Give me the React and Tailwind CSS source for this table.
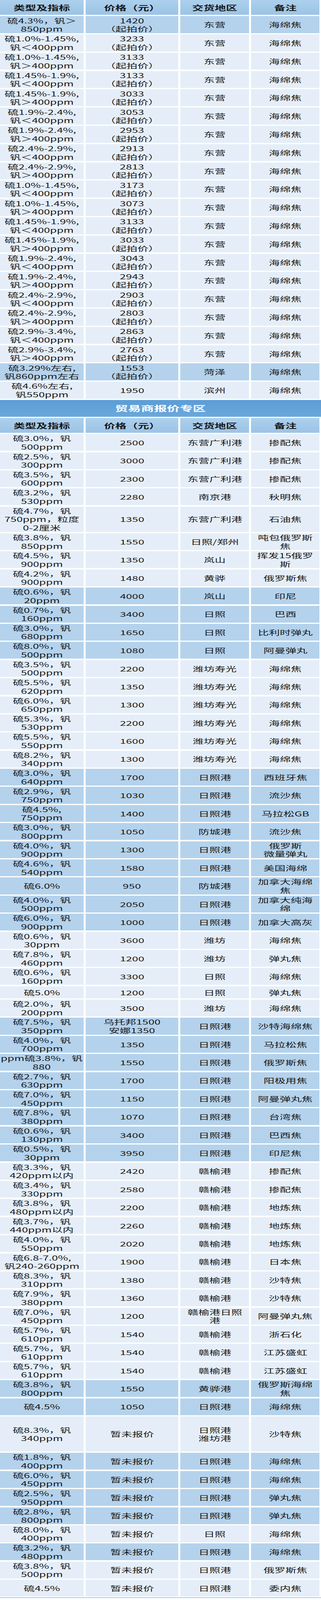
import React from 'react';

// tone: d = deeper blue row, l = light row; optional 6th item = row height class
const auctionRows = [
  ['硫4.3%，钒＞\n850ppm', '1420\n（起拍价）', '东营', '海绵焦', 'd'],
  ['硫1.0%-1.45%,\n钒＜400ppm', '3233\n（起拍价）', '东营', '海绵焦', 'l'],
  ['硫1.0%-1.45%,\n钒＞400ppm', '3133\n（起拍价）', '东营', '海绵焦', 'l'],
  ['硫1.45%-1.9%,\n钒＜400ppm', '3133\n（起拍价）', '东营', '海绵焦', 'l'],
  ['硫1.45%-1.9%,\n钒＞400ppm', '3033\n（起拍价）', '东营', '海绵焦', 'l'],
  ['硫1.9%-2.4%,\n钒＜400ppm', '3053\n（起拍价）', '东营', '海绵焦', 'l'],
  ['硫1.9%-2.4%,\n钒＞400ppm', '2953\n（起拍价）', '东营', '海绵焦', 'l'],
  ['硫2.4%-2.9%,\n钒＜400ppm', '2913\n（起拍价）', '东营', '海绵焦', 'l'],
  ['硫2.4%-2.9%,\n钒＞400ppm', '2813\n（起拍价）', '东营', '海绵焦', 'l'],
  ['硫1.0%-1.45%,\n钒＜400ppm', '3173\n（起拍价）', '东营', '海绵焦', 'l'],
  ['硫1.0%-1.45%,\n钒＞400ppm', '3073\n（起拍价）', '东营', '海绵焦', 'l'],
  ['硫1.45%-1.9%,\n钒＜400ppm', '3133\n（起拍价）', '东营', '海绵焦', 'l'],
  ['硫1.45%-1.9%,\n钒＞400ppm', '3033\n（起拍价）', '东营', '海绵焦', 'l'],
  ['硫1.9%-2.4%,\n钒＜400ppm', '3043\n（起拍价）', '东营', '海绵焦', 'l'],
  ['硫1.9%-2.4%,\n钒＞400ppm', '2943\n（起拍价）', '东营', '海绵焦', 'l'],
  ['硫2.4%-2.9%,\n钒＜400ppm', '2903\n（起拍价）', '东营', '海绵焦', 'l'],
  ['硫2.4%-2.9%,\n钒＞400ppm', '2803\n（起拍价）', '东营', '海绵焦', 'l'],
  ['硫2.9%-3.4%,\n钒＜400ppm', '2863\n（起拍价）', '东营', '海绵焦', 'l'],
  ['硫2.9%-3.4%,\n钒＞400ppm', '2763\n（起拍价）', '东营', '海绵焦', 'l'],
  ['硫3.29%左右,\n钒860ppm左右', '1553\n（起拍价）', '菏泽', '海绵焦', 'd'],
  ['硫4.6%左右,\n钒550ppm', '1950', '滨州', '海绵焦', 'l'],
];

const traderRows = [
  ['硫3.0%，钒\n500ppm', '2500', '东营广利港', '掺配焦', 'l'],
  ['硫2.5%，钒\n300ppm', '3000', '东营广利港', '掺配焦', 'l'],
  ['硫3.5%，钒\n600ppm', '2300', '东营广利港', '掺配焦', 'l'],
  ['硫3.2%，钒\n530ppm', '2280', '南京港', '秋明焦', 'l'],
  ['硫4.7%，钒\n750ppm，粒度\n0-2厘米', '1350', '东营广利港', '石油焦', 'l', 'h-[65px]'],
  ['硫3.8%，钒\n850ppm', '1550', '日照/郑州', '吨包俄罗斯\n焦', 'l'],
  ['硫4.5%，钒\n900ppm', '1350', '岚山', '挥发15俄罗\n斯', 'l'],
  ['硫4.2%，钒\n900ppm', '1480', '黄骅', '俄罗斯焦', 'l'],
  ['硫0.6%，钒\n20ppm', '4000', '岚山', '印尼', 'd'],
  ['硫0.7%，钒\n160ppm', '3400', '日照', '巴西', 'd'],
  ['硫3.0%，钒\n680ppm', '1650', '日照', '比利时弹丸', 'd'],
  ['硫8.0%，钒\n500ppm', '1080', '日照', '阿曼弹丸', 'd'],
  ['硫3.5%，钒\n500ppm', '2200', '潍坊寿光', '海绵焦', 'l'],
  ['硫5.5%，钒\n620ppm', '1350', '潍坊寿光', '海绵焦', 'l'],
  ['硫6.0%，钒\n650ppm', '1300', '潍坊寿光', '海绵焦', 'l'],
  ['硫5.3%，钒\n530ppm', '2200', '潍坊寿光', '海绵焦', 'l'],
  ['硫5.5%，钒\n550ppm', '1600', '潍坊寿光', '海绵焦', 'l'],
  ['硫8.2%，钒\n340ppm', '1300', '潍坊寿光', '海绵焦', 'l'],
  ['硫3.0%，钒\n640ppm', '1700', '日照港', '西班牙焦', 'd'],
  ['硫2.9%，钒\n750ppm', '1030', '日照港', '流沙焦', 'd'],
  ['硫4.5%,\n750ppm', '1400', '日照港', '马拉松GB', 'd'],
  ['硫3.0%，钒\n800ppm', '1050', '防城港', '流沙焦', 'd'],
  ['硫4.0%，钒\n900ppm', '1300', '日照港', '俄罗斯\n微量弹丸', 'd'],
  ['硫4.6%，钒\n540ppm', '1580', '日照港', '美国海绵', 'd'],
  ['硫6.0%', '950', '防城港', '加拿大海绵\n焦', 'd'],
  ['硫4.0%，钒\n500ppm', '2050', '日照港', '加拿大纯海\n绵', 'd'],
  ['硫6.0%，钒\n900ppm', '1000', '日照港', '加拿大高灰', 'd'],
  ['硫0.6%，钒\n30ppm', '3600', '潍坊', '海绵焦', 'l'],
  ['硫7.8%，钒\n460ppm', '1200', '潍坊', '弹丸焦', 'l'],
  ['硫0.6%，钒\n160ppm', '3300', '日照', '海绵焦', 'l'],
  ['硫5.0%', '1200', '日照', '弹丸焦', 'l', 'h-[31px]'],
  ['硫2.0%，钒\n200ppm', '3500', '潍坊', '海绵焦', 'l'],
  ['硫7.5%，钒\n350ppm', '乌托邦1500\n安娜1350', '日照港', '沙特海绵焦', 'd'],
  ['硫4.0%，钒\n700ppm', '1350', '日照港', '马拉松焦', 'd'],
  ['ppm硫3.8%，钒\n880', '1550', '日照港', '俄罗斯焦', 'd'],
  ['硫2.7%，钒\n630ppm', '1700', '日照港', '阳极用焦', 'd'],
  ['硫7.0%，钒\n450ppm', '1150', '日照港', '阿曼弹丸焦', 'd'],
  ['硫7.8%，钒\n380ppm', '1070', '日照港', '台湾焦', 'd'],
  ['硫0.6%，钒\n130ppm', '3400', '日照港', '巴西焦', 'd'],
  ['硫0.5%，钒\n30ppm', '3950', '日照港', '印尼焦', 'd'],
  ['硫3.3%，钒\n420ppm以内', '2420', '赣榆港', '掺配焦', 'l'],
  ['硫3.4%，钒\n330ppm', '2580', '赣榆港', '掺配焦', 'l'],
  ['硫3.8%，钒\n480ppm以内', '2200', '赣榆港', '地炼焦', 'l'],
  ['硫3.7%，钒\n440ppm以内', '2260', '赣榆港', '地炼焦', 'l'],
  ['硫4.0%，钒\n550ppm', '2020', '赣榆港', '地炼焦', 'l'],
  ['硫6.8-7.0%,\n钒240-260ppm', '1900', '赣榆港', '日本焦', 'l'],
  ['硫8.3%，钒\n310ppm', '1380', '赣榆港', '沙特焦', 'l'],
  ['硫7.9%，钒\n380ppm', '1360', '赣榆港', '沙特焦', 'l'],
  ['硫7.0%，钒\n450ppm', '1200', '赣榆港日照\n港', '阿曼弹丸焦', 'l'],
  ['硫5.7%，钒\n610ppm', '1540', '赣榆港', '浙石化', 'l'],
  ['硫5.7%，钒\n610ppm', '1540', '赣榆港', '江苏盛虹', 'l'],
  ['硫5.7%，钒\n610ppm', '1540', '赣榆港', '江苏盛虹', 'l'],
  ['硫3.8%，钒\n800ppm', '1550', '黄骅港', '俄罗斯海绵\n焦', 'd'],
  ['硫4.5%', '1050', '日照港', '海绵焦', 'd'],
  ['硫8.3%，钒\n340ppm', '暂未报价', '日照港\n潍坊港', '沙特焦', 'l', 'h-[90px]'],
  ['硫1.8%，钒\n400ppm', '暂未报价', '日照港', '海绵焦', 'd'],
  ['硫6.0%，钒\n450ppm', '暂未报价', '日照港', '海绵焦', 'd'],
  ['硫2.5%，钒\n950ppm', '暂未报价', '日照港', '弹丸焦', 'd'],
  ['硫2.8%，钒\n800ppm', '暂未报价', '日照港', '弹丸焦', 'd'],
  ['硫8.0%，钒\n400ppm', '暂未报价', '日照', '海绵焦', 'l'],
  ['硫3.2%，钒\n480ppm', '暂未报价', '日照港', '海绵焦', 'd'],
  ['硫3.8%，钒\n500ppm', '暂未报价', '日照港', '俄罗斯焦', 'l'],
  ['硫4.5%', '暂未报价', '日照港', '委内焦', 'l'],
];

const toneClass = {
  d: 'bg-[#b4d2ec]',
  l: 'bg-[#e5eef8]',
};

const gridCols = 'grid grid-cols-[214px_237px_176px_175px] gap-x-[5px]';

const Cell = ({ text, bg }) => (
  <div className={`flex items-center justify-center text-center ${bg}`}>
    <div className="scale-x-165 whitespace-pre text-[17px] leading-[21.5px] text-[#181818]">{text}</div>
  </div>
);

const HeaderRow = () => (
  <div className={`${gridCols} h-[38px]`}>
    {['类型及指标', '价格（元）', '交货地区', '备注'].map((label) => (
      <div key={label} className="flex items-center justify-center bg-gradient-to-b from-[#acd0ec] to-[#9cc3e6]">
        <div className="scale-x-160 text-[18px] leading-[24px] font-bold text-[#161616]">{label}</div>
      </div>
    ))}
  </div>
);

const Rows = ({ rows, defaultHeight }) =>
  rows.map((row, i) => (
    <div key={i} className={`${gridCols} ${row[5] || defaultHeight}`}>
      {row.slice(0, 4).map((text, j) => (
        <Cell key={j} text={text} bg={toneClass[row[4]]} />
      ))}
    </div>
  ));

export default function App() {
  return (
    <div className="w-[821px] overflow-hidden bg-white font-['Noto_Sans_CJK_SC','Noto_Sans',sans-serif]">
      <div className="flex flex-col gap-[3.3px] pr-[4px]">
        <HeaderRow />
        <Rows rows={auctionRows} defaultHeight="h-[43.5px]" />
      </div>

      {/* Trader quotes */}
      <div className="mt-[3.3px] flex h-[42.5px] items-center justify-center bg-gradient-to-b from-[#5b9dd6] to-[#6aa8dc]">
        <div className="scale-x-170 text-[19.5px] leading-[26px] font-bold text-white">贸易商报价专区</div>
      </div>

      <div className="mt-[3.3px] flex flex-col gap-[3.3px] pr-[4px]">
        <HeaderRow />
        <Rows rows={traderRows} defaultHeight="h-[43.1px]" />
      </div>

      <div className="mt-[1.5px] h-[2px] bg-[#a9cce9]" />
    </div>
  );
}
